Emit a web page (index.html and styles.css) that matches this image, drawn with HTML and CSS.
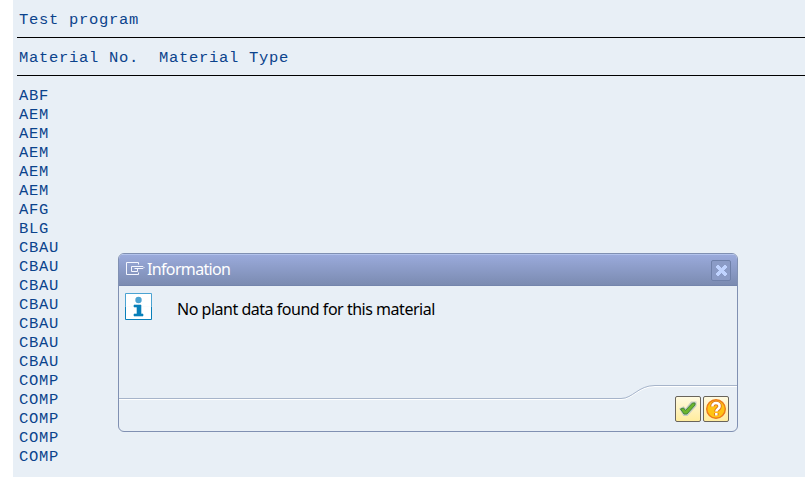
FILE: index.html
```html
<!DOCTYPE html>
<html lang="en">
<head>
    <meta charset="UTF-8">
    <title>Test program</title>
    <link rel="stylesheet" href="styles.css">
</head>
<body>

<main class="report">
    <div class="row">Test program</div>
    <hr class="rule">
    <div class="row">Material No.  Material Type</div>
    <hr class="rule">
    <div class="row">ABF</div>
    <div class="row">AEM</div>
    <div class="row">AEM</div>
    <div class="row">AEM</div>
    <div class="row">AEM</div>
    <div class="row">AEM</div>
    <div class="row">AFG</div>
    <div class="row">BLG</div>
    <div class="row">CBAU</div>
    <div class="row">CBAU</div>
    <div class="row">CBAU</div>
    <div class="row">CBAU</div>
    <div class="row">CBAU</div>
    <div class="row">CBAU</div>
    <div class="row">CBAU</div>
    <div class="row">COMP</div>
    <div class="row">COMP</div>
    <div class="row">COMP</div>
    <div class="row">COMP</div>
    <div class="row">COMP</div>
</main>

<div class="dialog" role="dialog">
    <div class="dialog-header">
        <svg class="window-icon" width="19" height="14" viewBox="0 0 19 14">
            <path d="M12.5 2.5v-2H.5v12h12v-2M5.5 4.5h11.5l1 1-1 1H12M5.5 4.5v5h6v-3M8.5 6.5H12" fill="none" stroke="#f4f6ff"/>
        </svg>
        <span class="dialog-title">Information</span>
        <button class="close" aria-label="Close">
            <svg width="11" height="11" viewBox="0 0 11 11">
                <path d="M0 1h1V0h2v1h1v1h1v1h1V2h1V1h1V0h2v1h1v2h-1v1H9v1H8v1h1v1h1v1h1v2h-1v1H8v-1H7V9H6V8H5v1H4v1H3v1H1v-1H0V8h1V7h1V6h1V5H2V4H1V3H0z" fill="#c0d3ff"/>
            </svg>
        </button>
    </div>
    <div class="dialog-body">
        <svg class="info-icon" width="27" height="27" viewBox="0 0 27 27">
            <path d="M.5 13.5V.5h26v13" fill="#fff" stroke="#4ba3d2"/>
            <path d="M.5 13.5v13h26v-13" fill="#fff" stroke="#087fba"/>
            <circle cx="13.5" cy="7" r="3.2" fill="#4ba3d2"/>
            <path d="M9 12h7v9h2v2H9v-2h3v-7H9z" fill="#087fba" stroke="#087fba" stroke-width=".6"/>
        </svg>
        <span class="message">No plant data found for this material</span>
    </div>
    <div class="dialog-footer">
        <svg class="divider" width="618" height="18" viewBox="0 0 618 18">
            <path d="M0 15.5h502c12 0 17-13 34-13h82" fill="none" stroke="#fff"/>
            <path d="M0 14.5h502c12 0 17-13 34-13h82" fill="none" stroke="#a6b4ca"/>
        </svg>
        <div class="buttons">
            <button class="tool" aria-label="Continue">
                <svg width="18" height="16" viewBox="0 0 18 16">
                    <path d="M1.5 8l3-1.5 2 2.5 6-7.5h4v3L8 14H5z" fill="#b9c4bd" stroke="#c5ccc4" stroke-width="2"/>
                    <path d="M1.5 8l3-1 2 2.5 7-7.5h2.5v2L8 13H5z" fill="#6cb52c" stroke="#438738"/>
                </svg>
            </button>
            <button class="tool" aria-label="Help">
                <svg width="20" height="20" viewBox="0 0 20 20">
                    <circle cx="10" cy="10" r="9.3" fill="#ffc313" stroke="#ed7a18" stroke-width="1.4"/>
                    <path d="M6.4 7.5c0-4.8 7.2-4.2 7.2-.2 0 2.7-3.3 2.7-3.3 5.2M10.3 14v2.4" fill="none" stroke="#df751e" stroke-width="4.4"/>
                    <path d="M6.4 7.5c0-4.8 7.2-4.2 7.2-.2 0 2.7-3.3 2.7-3.3 5.2M10.3 14v2.4" fill="none" stroke="#fff" stroke-width="2.5"/>
                </svg>
            </button>
        </div>
    </div>
</div>

</body>
</html>
```
FILE: styles.css
```css
* {
    box-sizing: border-box;
}
body {
    margin: 0;
    height: 477px;
    overflow: hidden;
    background: #fff;
}
.report {
    height: 477px;
    margin-left: 13px;
    padding: 10px 0 0 4px;
    background: #e8eff6;
    color: #0b438c;
    font-family: "Courier New", "Liberation Mono", monospace;
    font-size: 15.5px;
    letter-spacing: 0.7px;
}
.row {
    height: 19px;
    padding-left: 2px;
    line-height: 21px;
    white-space: pre;
}
.rule {
    height: 1px;
    margin: 8px 0 10px;
    border: none;
    background: #000;
}
.dialog {
    position: absolute;
    left: 118px;
    top: 253px;
    width: 620px;
    height: 179px;
    display: flex;
    flex-direction: column;
    border: 1px solid #8090b2;
    border-radius: 6px;
    background: #e8eff6;
    overflow: hidden;
    font-family: "Noto Sans", sans-serif;
    font-size: 16px;
}
.dialog-header {
    display: flex;
    align-items: center;
    height: 32px;
    padding: 0 6px 0 7px;
    border-top: 1px solid #b3c3ec;
    border-bottom: 1px solid #7485ac;
    background: linear-gradient(#9aaadb, #7b8bb1);
    color: #fff;
}
.window-icon {
    margin: -2px 2px 0 0;
}
.dialog-title {
    height: 30px;
    line-height: 28px;
    letter-spacing: -0.65px;
}
.close {
    display: flex;
    align-items: center;
    justify-content: center;
    width: 20px;
    height: 21px;
    margin-left: auto;
    padding: 0;
    border: 1px solid #6f80a9;
    border-radius: 2px;
    background: #8b9bc6;
}
.dialog-body {
    display: flex;
    flex: 1;
    align-items: flex-start;
    padding: 7px 6px;
}
.message {
    margin-left: 25px;
    line-height: 33px;
    letter-spacing: -0.48px;
    color: #000;
}
.dialog-footer {
    height: 47px;
}
.divider {
    display: block;
}
.buttons {
    display: flex;
    justify-content: flex-end;
    gap: 2px;
    margin-top: -6px;
    padding-right: 8px;
}
.tool {
    display: flex;
    align-items: center;
    justify-content: center;
    width: 26px;
    height: 26px;
    padding: 0;
    border: 1px solid #69645b;
    border-radius: 2px;
    background: linear-gradient(#fffae0, #ffec9d);
}
```
